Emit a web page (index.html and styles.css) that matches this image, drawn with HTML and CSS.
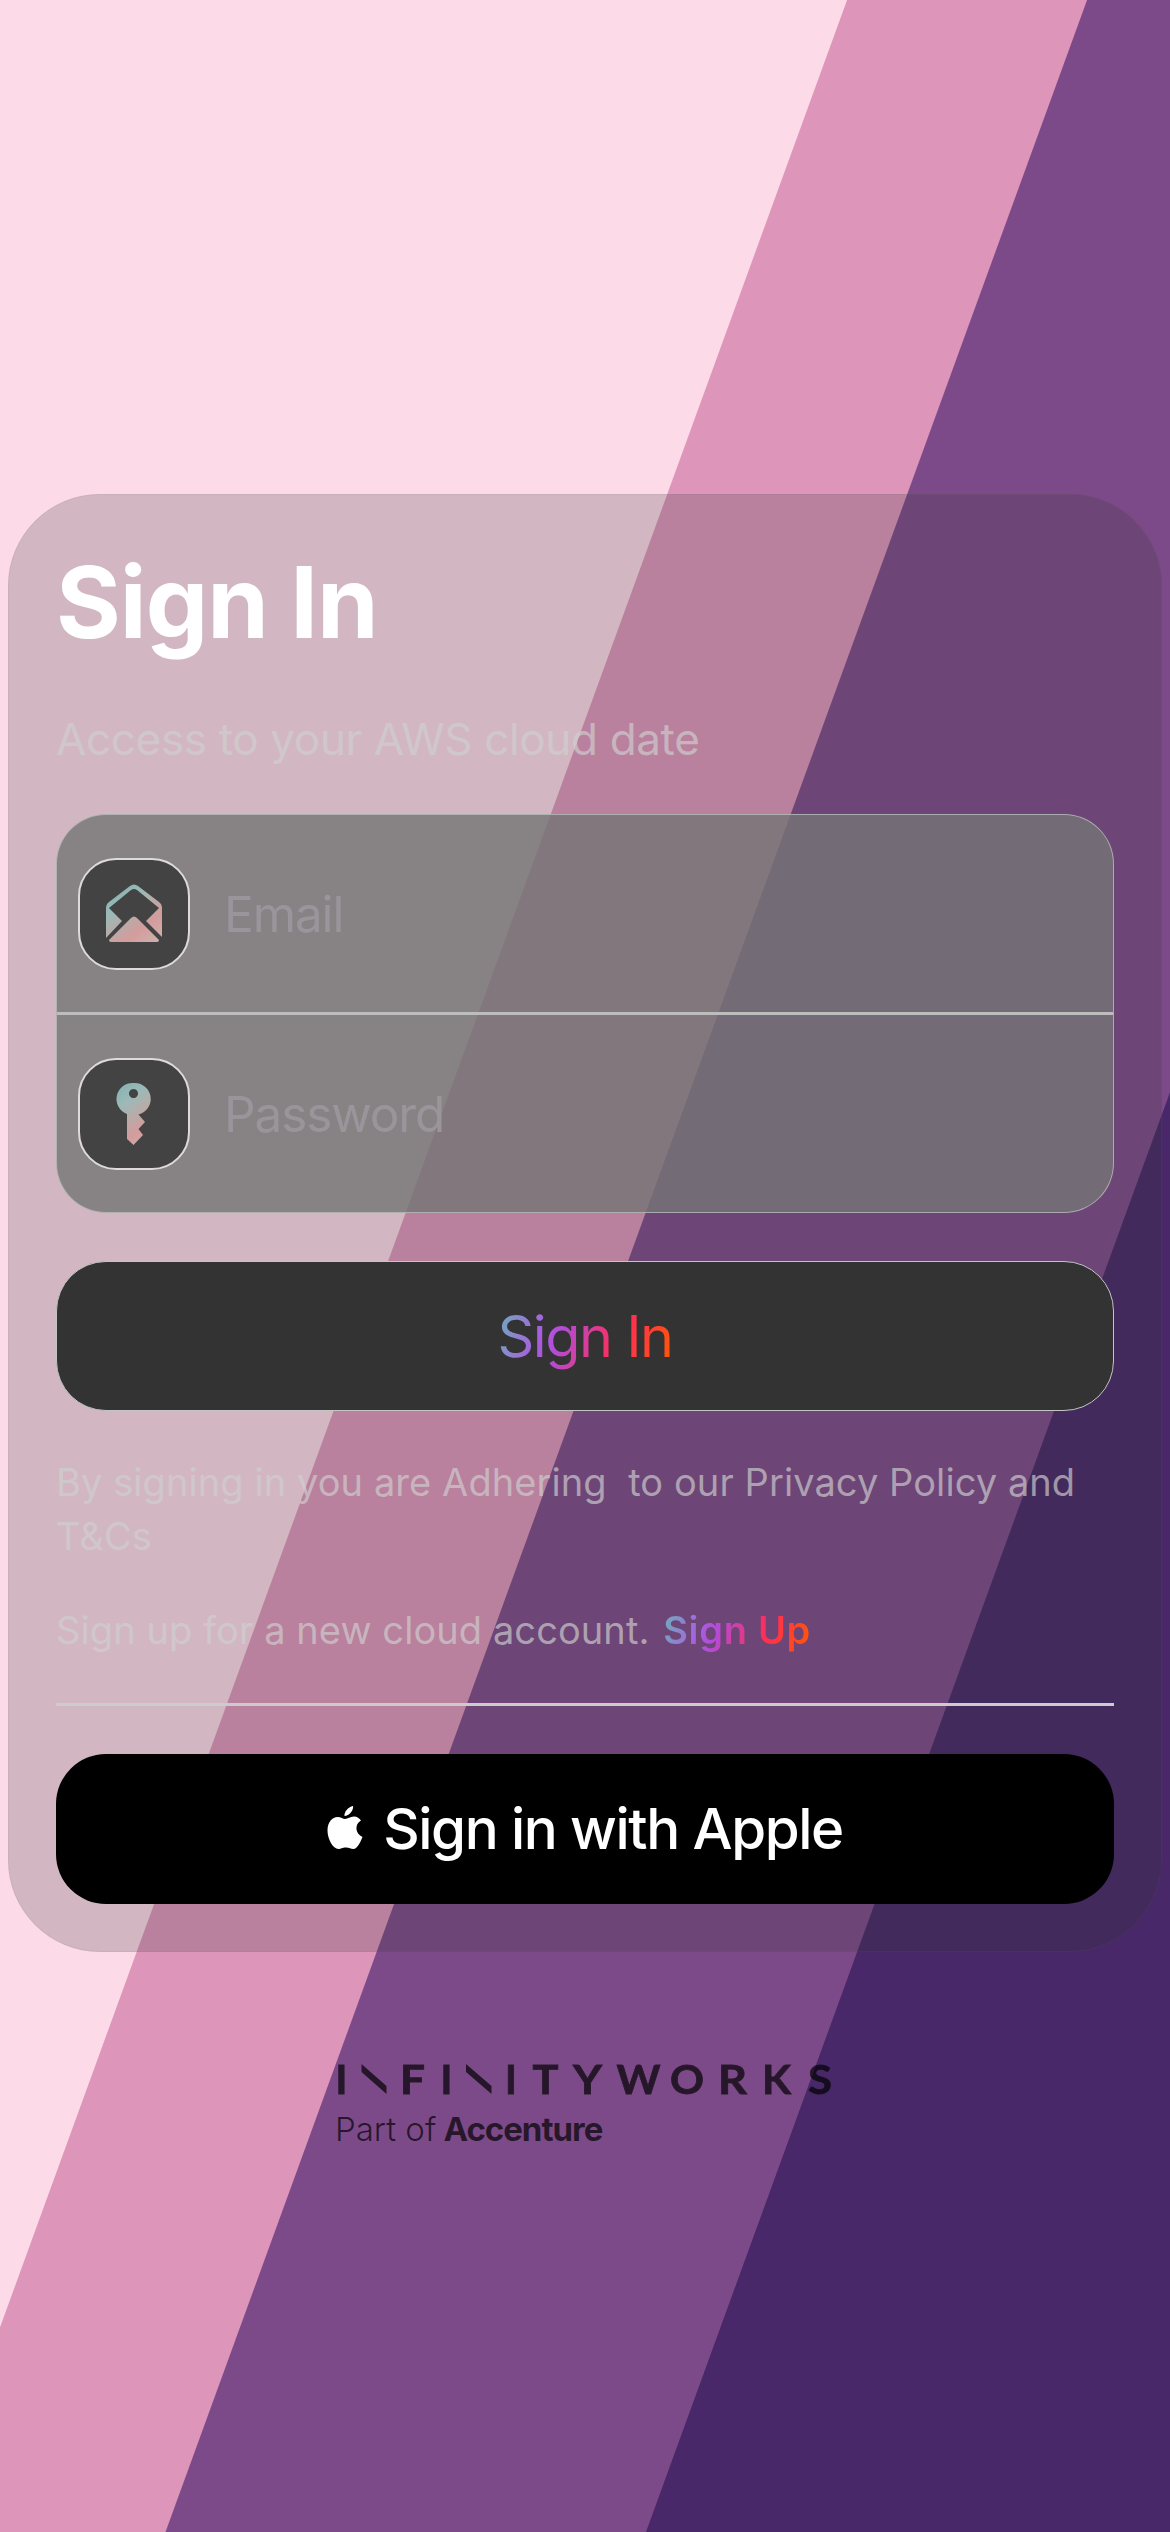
FILE: index.html
```html
<!DOCTYPE html>
<html lang="en">
<head>
<meta charset="utf-8">
<title>Sign In</title>
<link rel="stylesheet" href="styles.css">
</head>
<body>
<main class="screen">
  <section class="card">
    <h1 class="title">Sign In</h1>
    <p class="subtitle">Access to your AWS cloud date</p>
    <div class="fields">
      <label class="field">
        <span class="icon-box">
          <svg class="icon" viewBox="0 1 108 108">
            <defs>
              <linearGradient id="tint" gradientUnits="userSpaceOnUse" x1="30" y1="26" x2="80" y2="92">
                <stop offset="0" stop-color="#7fb0b2"/>
                <stop offset=".28" stop-color="#9bbab7"/>
                <stop offset=".65" stop-color="#d49c9c"/>
                <stop offset="1" stop-color="#c9bcb4"/>
              </linearGradient>
            </defs>
            <path fill="url(#tint)" fill-rule="evenodd" d="M26 48q0-3 3-5L50 27q4-3 8 0L79 43q3 2 3 5V78L66 62 79 49 57 31q-3-2-6 0L29 49 42 62 26 79Z"/>
            <path fill="url(#tint)" d="M51 59q3-3 6 0L79 81q0 2-2 2H31q-2 0-2-2Z"/>
          </svg>
        </span>
        <span class="placeholder">Email</span>
      </label>
      <label class="field field-last">
        <span class="icon-box">
          <svg class="icon" viewBox="0 1 108 108">
            <path fill="url(#tint)" fill-rule="evenodd" d="M53.500 24a16 16 0 0 1 5 31.500L65 63 58.500 70 63 76 53.500 86 47 80V55a16 16 0 0 1 6.500-31ZM53.500 30a4.500 4.500 0 1 0 .01 0Z"/>
          </svg>
        </span>
        <span class="placeholder">Password</span>
      </label>
    </div>
    <button class="button button-primary"><span class="rainbow">Sign In</span></button>
    <p class="note terms">By signing in you are Adhering&nbsp; to our Privacy Policy and T&amp;Cs</p>
    <p class="note signup">Sign up for a new cloud account. <a class="rainbow signup-link">Sign Up</a></p>
    <hr class="rule">
    <button class="button button-apple">
      <svg class="apple" viewBox="0 0 36 44"><path d="M26 0C27 4 22 10 17.500 10 17 6 21 1 26 0ZM18 13C21 13 23 10.500 27 10.500 30 10.500 32.500 12.500 34 14.500 27 18.500 28.500 28 35.500 31 33 37 30 43 26.500 43 23.500 43 22.500 41.500 19 41.500 15 41.500 14 43 11.500 43 6 43 .5 33 .5 24.500 .5 16 5.500 11 10.500 11 14 11 16 13 18 13Z"/></svg>
      <span class="apple-label">Sign in with Apple</span>
    </button>
  </section>
  <svg class="brand" viewBox="0 -20 500 120" role="img" aria-label="Infinityworks, part of Accenture">
    <g class="wordmark">
      <text y="33.500" x="6.500">I</text>
      <text y="33.500" x="77.500" textLength="25" lengthAdjust="spacingAndGlyphs">F</text>
      <text y="33.500" x="111.500">I</text>
      <text y="33.500" x="176">I</text>
      <text y="33.500" x="210.500" textLength="26" lengthAdjust="spacingAndGlyphs">T</text>
      <text y="33.500" x="252.500" textLength="29" lengthAdjust="spacingAndGlyphs">Y</text>
      <text y="33.500" x="303.500" textLength="44" lengthAdjust="spacingAndGlyphs">W</text>
      <text y="33.500" x="352" textLength="34" lengthAdjust="spacingAndGlyphs">O</text>
      <text y="33.500" x="397.500" textLength="29" lengthAdjust="spacingAndGlyphs">R</text>
      <text y="33.500" x="441.500" textLength="29" lengthAdjust="spacingAndGlyphs">K</text>
      <text y="33.500" x="485" textLength="24" lengthAdjust="spacingAndGlyphs">S</text>
      <path class="slash" d="M26.500 4 51.500 26V34L26.500 12ZM131 4 156.500 26V34L131 12Z"/>
    </g>
    <text class="part" x="0" y="81">Part of</text>
    <text class="accenture" x="108.500" y="81">Accenture</text>
  </svg>
</main>
</body>
</html>
```
FILE: styles.css
```css
* { box-sizing: border-box; }

body {
  margin: 0;
  font-family: Inter, "Liberation Sans", sans-serif;
}

.screen {
  width: 1170px;
  height: 2532px;
  padding: 494px 8px 0;
  overflow: hidden;
  display: flex;
  flex-direction: column;
  align-items: center;
  background: linear-gradient(110deg,
    #fddae8 795.500px, #dd96ba 796.500px,
    #dd96ba 1021px, #7d4a89 1022px,
    #7d4a89 1472.500px, #482868 1473.500px);
}

.card {
  width: 1154px;
  height: 1458px;
  padding: 48px;
  border-radius: 92px;
  display: flex;
  flex-direction: column;
  background: rgba(50, 50, 50, .21);
  box-shadow: inset 0 0 0 1px rgba(120, 120, 120, .1);
}

.title {
  margin: 0;
  height: 122px;
  line-height: 121px;
  font-size: 99px;
  font-weight: 700;
  letter-spacing: -1px;
  color: #fff;
}

.subtitle {
  margin: 48px 0;
  height: 54px;
  line-height: 54px;
  font-size: 44px;
  letter-spacing: -.350px;
  color: rgba(208, 208, 208, .67);
}

.fields {
  height: 399px;
  border: 1px solid rgba(190, 194, 194, .75);
  border-radius: 50px;
  background: rgba(116, 116, 116, .8);
}

.field {
  height: 200px;
  padding-left: 21px;
  display: flex;
  align-items: center;
  gap: 34px;
  border-bottom: 3px solid #bdbdbd;
}

.field-last {
  height: 197px;
  border-bottom: 0;
}

.icon-box {
  width: 112px;
  height: 112px;
  border: 2px solid #dedada;
  border-radius: 38px;
  background: #434343;
}

.icon {
  display: block;
  width: 108px;
  height: 108px;
}

.placeholder {
  font-size: 49.500px;
  letter-spacing: -1.100px;
  color: #99959b;
}

.button {
  width: 100%;
  padding: 0;
  border: 0;
  border-radius: 50px;
  display: flex;
  align-items: center;
  justify-content: center;
  font-family: inherit;
}

.button-primary {
  height: 150px;
  margin-top: 48px;
  border: 1px solid #c4c4c4;
  background: #333;
  font-size: 57.500px;
  letter-spacing: -1.500px;
}

.rainbow {
  color: transparent;
  background: linear-gradient(110deg, #67b6b8 0%, #a75fdd 27%, #b44bd6 38%, #ff2d55 68%, #ff5a00 100%);
  -webkit-background-clip: text;
  background-clip: text;
}

.note {
  margin: 0;
  font-size: 38px;
  line-height: 54px;
  letter-spacing: .08px;
  color: rgba(208, 208, 208, .67);
}

.terms { margin-top: 44px; }
.signup { margin-top: 40px; }

.signup-link {
  margin-left: 3px;
  font-weight: 600;
  letter-spacing: .7px;
}

.rule {
  width: 100%;
  height: 3px;
  margin: 46px 0 48px;
  border: 0;
  background: #cdcbcd;
}

.button-apple {
  height: 150px;
  padding-bottom: 2px;
  gap: 20px;
  background: #000;
  color: #fff;
  font-size: 56.500px;
  font-weight: 500;
  letter-spacing: -1.400px;
}

.apple {
  width: 36px;
  height: 44px;
  fill: #fff;
}

.brand {
  width: 500px;
  height: 120px;
  margin-top: 88px;
  fill: rgba(0, 0, 0, .69);
}

.wordmark {
  font-family: Lato, sans-serif;
  font-size: 40px;
  font-weight: 700;
  text-anchor: middle;
  fill: #000;
  stroke: #000;
  stroke-width: .8px;
  opacity: .69;
}

.slash { stroke: none; }

.part { font-size: 33px; font-weight: 300; }
.accenture { font-size: 33px; font-weight: 700; letter-spacing: -1px; }
```
